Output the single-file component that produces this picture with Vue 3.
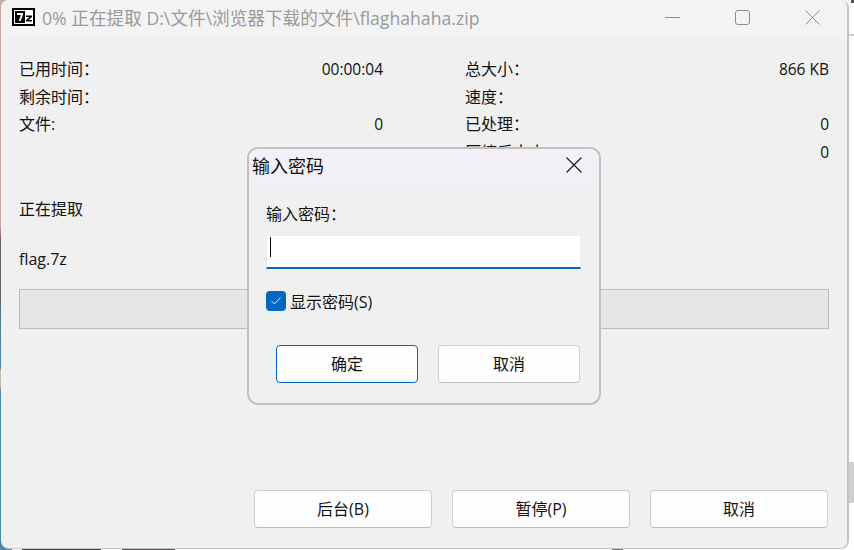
<script setup>
const stats = [
  [{ label: '已用时间：', value: '00:00:04' }, { label: '总大小：', value: '866 KB' }],
  [{ label: '剩余时间：', value: '' }, { label: '速度：', value: '' }],
  [{ label: '文件:', value: '0' }, { label: '已处理：', value: '0' }],
  [{ label: '', value: '' }, { label: '压缩后大小：', value: '0' }],
]
const actions = ['后台(B)', '暂停(P)', '取消']
</script>

<template>
  <div class="desktop">
    <div class="window">
      <header class="titlebar">
        <svg class="logo" width="23" height="18" viewBox="0 0 23 18">
          <rect width="23" height="18" fill="#000" />
          <rect x="2" y="2" width="19" height="14" fill="#fff" />
          <rect x="3" y="3" width="10" height="12" fill="#000" />
          <path d="M5 5h6v1.800L8.600 13H6.700L9 7H5z" fill="#fff" />
          <path d="M14 7.500h6v1.500l-3.500 3h3.500v1.500h-6V12l3.500-3h-3.500z" fill="#000" />
        </svg>
        <span class="title">0% 正在提取 D:\文件\浏览器下载的文件\flaghahaha.zip</span>
        <div class="controls">
          <svg width="15" height="15" viewBox="0 0 15 15"><path d="M0 7.500H15" stroke="#8c8c8c" fill="none" /></svg>
          <svg width="15" height="15" viewBox="0 0 15 15"><rect x="0.500" y="0.500" width="14" height="14" rx="2.500" stroke="#8c8c8c" fill="none" /></svg>
          <svg width="15" height="15" viewBox="0 0 15 15"><path d="M0.500 0.500L14.500 14.500M14.500 0.500L0.500 14.500" stroke="#8c8c8c" fill="none" /></svg>
        </div>
      </header>

      <main class="body">
        <section class="stats">
          <template v-for="(row, r) in stats" :key="r">
            <div v-for="(cell, c) in row" :key="c" class="stat">
              <span>{{ cell.label }}</span>
              <span class="value">{{ cell.value }}</span>
            </div>
          </template>
        </section>
        <p class="status">正在提取</p>
        <p class="file">flag.7z</p>
        <div class="progress"></div>
        <footer class="actions">
          <button v-for="a in actions" :key="a" class="btn wide">{{ a }}</button>
        </footer>
      </main>

      <div class="dialog">
        <div class="dialog-title">
          <span>输入密码</span>
          <svg width="16" height="16" viewBox="0 0 16 16"><path d="M0.500 0.500L15.500 15.500M15.500 0.500L0.500 15.500" stroke="#1a1a1a" stroke-width="1.200" fill="none" /></svg>
        </div>
        <div class="dialog-body">
          <label class="field-label">输入密码：</label>
          <div class="input"><i class="caret"></i></div>
          <div class="check-row">
            <span class="check">
              <svg width="10" height="8" viewBox="0 0 10 8"><path d="M0.500 4L3.500 7L9.500 0.500" stroke="#e4edf7" fill="none" /></svg>
            </span>
            <span>显示密码(S)</span>
          </div>
          <div class="dialog-actions">
            <button class="btn small primary">确定</button>
            <button class="btn small">取消</button>
          </div>
        </div>
      </div>
    </div>
  </div>
</template>

<style scoped>
.desktop {
  width: 854px;
  height: 550px;
  overflow: hidden;
  background:
    linear-gradient(#444, #444) 22px 549px / 79px 1px no-repeat,
    linear-gradient(#5a5252, #5a5252) 122px 549px / 53px 1px no-repeat,
    linear-gradient(#777, #777) 612px 549px / 11px 1px no-repeat,
    linear-gradient(#d0d0d0, #d0d0d0) 849px 462px / 5px 41px no-repeat,
    linear-gradient(#cfcfcf, #cfcfcf) 849px 34px / 5px 2px no-repeat,
    linear-gradient(#555, #555) 851px 0 / 3px 3px no-repeat,
    linear-gradient(180deg, #c9aaa5 0, #c9aaa5 225px, #6a5f60 240px, #6b5f62 295px, #4b7f9c 320px, #4b8aa8 368px, #cdb8a4 370px, #cdb8a4 385px, #4b8aa8 392px, #4b8aa8 100%) 0 0 / 12px 100% no-repeat,
    #fdfdfd;
  font-family: "Open Sans", "Noto Sans CJK SC", sans-serif;
  font-size: 16px;
  color: #111;
}
.window {
  position: relative;
  margin-left: 1px;
  width: 848px;
  height: 549px;
  box-sizing: border-box;
  background: #f0f0f0;
  border-right: 2px solid #c4c4c4;
  border-bottom: 1px solid #c4c4c4;
  border-radius: 8px;
  overflow: hidden;
  display: flex;
  flex-direction: column;
}
.titlebar {
  height: 38px;
  box-sizing: border-box;
  flex: none;
  background: #f3f3f3;
  display: flex;
  align-items: center;
  padding: 0 0 4px 11px;
}
.logo { flex: none; margin-right: 7px; }
.title {
  font-size: 17.650px;
  color: #9a9a9a;
  white-space: nowrap;
}
.controls {
  margin-left: auto;
  width: 155px;
  margin-right: 27px;
  display: flex;
  justify-content: space-between;
}
.body {
  flex: 1;
  display: flex;
  flex-direction: column;
  padding: 18px 18px 20px 18px;
  min-height: 0;
}
.stats {
  display: grid;
  grid-template-columns: 364px 364px;
  column-gap: 82px;
  grid-auto-rows: 27.500px;
}
.stat {
  display: flex;
  justify-content: space-between;
  align-items: center;
  line-height: 27px;
  white-space: nowrap;
}
.value { font-size: 15.500px; }
.status { margin: 31px 0 0; line-height: 24px; }
.file { margin: 26px 0 0; line-height: 24px; }
.progress {
  margin-top: 18px;
  height: 40px;
  width: 810px;
  box-sizing: border-box;
  background: #e6e6e6;
  border: 1px solid #bcbcbc;
}
.actions {
  margin-top: auto;
  display: flex;
  justify-content: flex-end;
  gap: 20px;
  padding-right: 1px;
}
.btn {
  font: inherit;
  color: #111;
  background: #fdfdfd;
  border: 1px solid #d0d0d0;
  border-bottom-color: #bdbdbd;
  border-radius: 4px;
  padding: 0 0 2px;
  height: 38px;
}
.btn.wide { width: 178px; }
.btn.small { width: 142px; }
.btn.primary { border-color: #0067c0; }
.dialog {
  position: absolute;
  left: 246px;
  top: 147px;
  width: 354px;
  height: 258px;
  box-sizing: border-box;
  background: #f0f0f0;
  border: 2px solid #c0c0c0;
  border-radius: 11px;
  overflow: hidden;
}
.dialog-title {
  height: 35px;
  box-sizing: border-box;
  background: #f3f0f7;
  display: flex;
  align-items: center;
  justify-content: space-between;
  padding: 0 17px 3px 3px;
  font-size: 18px;
}
.dialog-body { padding: 18px 19px 0 17px; }
.field-label { display: block; line-height: 24px; }
.input {
  margin-top: 9px;
  height: 34px;
  width: 315px;
  box-sizing: border-box;
  background: #fff;
  border: 1px solid #ececec;
  border-bottom: 2px solid #0067c0;
  display: flex;
  align-items: flex-start;
  padding: 1px 0 0 3px;
}
.caret { display: block; width: 1px; height: 20px; background: #000; }
.check-row {
  margin-top: 22px;
  display: flex;
  align-items: center;
  gap: 4px;
  height: 20px;
}
.check {
  width: 20px;
  height: 20px;
  background: #0067c0;
  border-radius: 4px;
  display: flex;
  align-items: center;
  justify-content: center;
}
.dialog-actions {
  margin-top: 34px;
  display: flex;
  gap: 20px;
  padding-left: 10px;
}
</style>
